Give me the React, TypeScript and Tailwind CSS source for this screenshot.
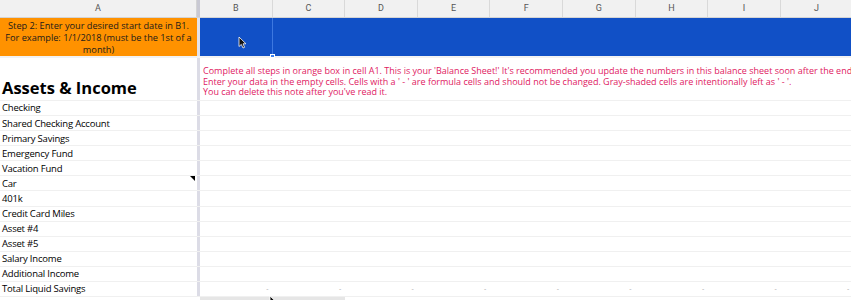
import React from "react";

const cols = ["B", "C", "D", "E", "F", "G", "H", "I", "J"];
const labels = [
  "Checking",
  "Shared Checking Account",
  "Primary Savings",
  "Emergency Fund",
  "Vacation Fund",
  "Car",
  "401k",
  "Credit Card Miles",
  "Asset #4",
  "Asset #5",
  "Salary Income",
  "Additional Income",
  "Total Liquid Savings",
];

export default function App() {
  return (
    <div
      className="w-[851px] h-[300px] overflow-hidden bg-white relative"
      style={{ fontFamily: '"Open Sans", "Noto Sans", sans-serif' }}
    >
      {/* Column header */}
      <div className="flex h-[18px] bg-[#f1f1f1] border-b border-[#d4d4d4]">
        <div className="w-[197px] shrink-0 flex items-center justify-center text-[9px] text-[#555] border-r border-[#d4d4d4]" style={{ fontFamily: "Roboto, sans-serif" }}>
          A
        </div>
        <div className="w-[3px] shrink-0 bg-[#c9c9d3]" />
        {cols.map((c) => (
          <div
            key={c}
            className="w-[72.6px] shrink-0 flex items-center justify-center text-[9px] text-[#555] border-r border-[#d9d9d9]"
            style={{ fontFamily: "Roboto, sans-serif" }}
          >
            {c}
          </div>
        ))}
      </div>

      {/* Row 1 */}
      <div className="flex h-[40px] border-b-2 border-[#f2f2f2]">
        <div className="w-[197px] shrink-0 bg-[#ff9200] flex items-center justify-center text-center text-[9.2px] leading-[12px] text-[#1a1a1a] pt-[1px]">
          Step 2: Enter your desired start date in B1. For example: 1/1/2018 (must be the 1st of a month)
        </div>
        <div className="w-[3px] shrink-0 bg-[#e3e3ea]" />
        <div className="flex-1 flex bg-[#1150c6]">
          <div className="w-[72.6px] shrink-0 border-r border-[#3d78e0] relative">
            <div className="absolute right-[-3px] bottom-[-2px] w-[5px] h-[4px] bg-[#3b82f0] border border-white" />
          </div>
        </div>
      </div>

      {/* Row 2 */}
      <div className="flex h-[43px] border-b border-[#f0f0f0]">
        <div className="w-[197px] shrink-0 flex items-end pl-[2px] pb-[2px]">
          <span className="text-[16.5px] font-bold text-black leading-[20px]">Assets &amp; Income</span>
        </div>
        <div className="w-[3px] shrink-0 bg-[#dcdce6]" />
        <div className="flex-1 pl-[3px] pt-[8px] text-[9px] leading-[10.6px] text-[#e0195f] whitespace-nowrap overflow-hidden">
          <div>
            Complete all steps in orange box in cell A1. This is your 'Balance Sheet!' It's recommended you update the numbers in this balance sheet soon after the end of each month.
          </div>
          <div>
            Enter your data in the empty cells. Cells with a ' - ' are formula cells and should not be changed. Gray-shaded cells are intentionally left as ' - '.
          </div>
          <div>You can delete this note after you've read it.</div>
        </div>
      </div>

      {/* Data rows */}
      {labels.map((l, i) => (
        <div key={l} className="flex h-[15.08px] border-b border-[#f0f0f0]">
          <div className="w-[197px] shrink-0 flex items-center pl-[2px] pt-[1px] text-[9.5px] tracking-[-0.2px] text-black relative">
            {l}
            {l === "Car" && (
              <div className="absolute right-[2px] top-0 w-0 h-0 border-l-[5px] border-l-transparent border-t-[5px] border-t-black" />
            )}
          </div>
          <div className="w-[3px] shrink-0 bg-[#dcdce6]" />
          <div className="flex-1 flex">
            {i === labels.length - 1 &&
              cols.map((c) => (
                <div key={c} className="w-[72.6px] shrink-0 flex items-center justify-end pr-[4px] text-[7px] text-[#aaa]">
                  -
                </div>
              ))}
          </div>
        </div>
      ))}

      {/* bottom scroll bar hint */}
      <div className="flex">
        <div className="w-[200px] shrink-0" />
        <div className="w-[145px] h-[6px] bg-[#e6e6e6]" />
      </div>

      {/* Mouse cursor in B1 */}
      <svg className="absolute left-[238px] top-[36px]" width="9" height="13" viewBox="0 0 9 13">
        <path d="M1 1 L1 10.5 L3.3 8.4 L5 12 L6.6 11.3 L5 7.8 L8 7.8 Z" fill="#111" stroke="#fff" strokeWidth="0.8" />
      </svg>
      <svg className="absolute left-[269px] top-[295px]" width="9" height="13" viewBox="0 0 9 13">
        <path d="M1 1 L1 10.5 L3.3 8.4 L5 12 L6.6 11.3 L5 7.8 L8 7.8 Z" fill="#111" stroke="#fff" strokeWidth="0.8" />
      </svg>
    </div>
  );
}
